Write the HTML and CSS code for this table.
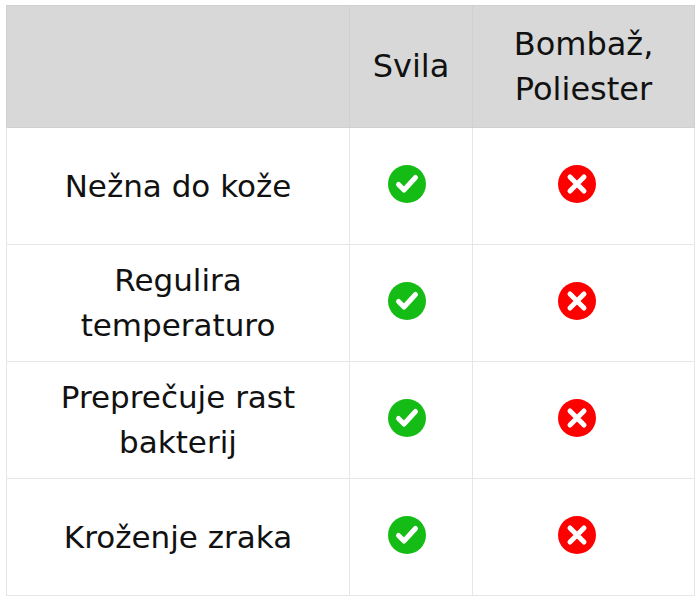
FILE: index.html
```html
<!DOCTYPE html>
<html>
<head>
<meta charset="utf-8">
<link rel="stylesheet" href="styles.css">
</head>
<body>
<table class="cmp">
  <colgroup><col class="c1"><col class="c2"><col class="c3"></colgroup>
  <thead>
    <tr><th></th><th>Svila</th><th>Bombaž,<br>Poliester</th></tr>
  </thead>
  <tbody>
    <tr><td>Nežna do kože</td>
      <td><svg class="ic yes" viewBox="0 0 38 38"><circle cx="19" cy="19" r="19" fill="#16bc16"/><path d="M10.5 19.5 L16 25 L27.5 12.5" fill="none" stroke="#fff" stroke-width="5" stroke-linecap="round" stroke-linejoin="round"/></svg></td>
      <td><svg class="ic no" viewBox="0 0 38 38"><circle cx="19" cy="19" r="19" fill="#fe0000"/><path d="M12 12 L26 26 M26 12 L12 26" fill="none" stroke="#fff" stroke-width="5" stroke-linecap="round"/></svg></td></tr>
    <tr><td>Regulira<br>temperaturo</td>
      <td><svg class="ic yes" viewBox="0 0 38 38"><circle cx="19" cy="19" r="19" fill="#16bc16"/><path d="M10.5 19.5 L16 25 L27.5 12.5" fill="none" stroke="#fff" stroke-width="5" stroke-linecap="round" stroke-linejoin="round"/></svg></td>
      <td><svg class="ic no" viewBox="0 0 38 38"><circle cx="19" cy="19" r="19" fill="#fe0000"/><path d="M12 12 L26 26 M26 12 L12 26" fill="none" stroke="#fff" stroke-width="5" stroke-linecap="round"/></svg></td></tr>
    <tr><td>Preprečuje rast<br>bakterij</td>
      <td><svg class="ic yes" viewBox="0 0 38 38"><circle cx="19" cy="19" r="19" fill="#16bc16"/><path d="M10.5 19.5 L16 25 L27.5 12.5" fill="none" stroke="#fff" stroke-width="5" stroke-linecap="round" stroke-linejoin="round"/></svg></td>
      <td><svg class="ic no" viewBox="0 0 38 38"><circle cx="19" cy="19" r="19" fill="#fe0000"/><path d="M12 12 L26 26 M26 12 L12 26" fill="none" stroke="#fff" stroke-width="5" stroke-linecap="round"/></svg></td></tr>
    <tr><td>Kroženje zraka</td>
      <td><svg class="ic yes" viewBox="0 0 38 38"><circle cx="19" cy="19" r="19" fill="#16bc16"/><path d="M10.5 19.5 L16 25 L27.5 12.5" fill="none" stroke="#fff" stroke-width="5" stroke-linecap="round" stroke-linejoin="round"/></svg></td>
      <td><svg class="ic no" viewBox="0 0 38 38"><circle cx="19" cy="19" r="19" fill="#fe0000"/><path d="M12 12 L26 26 M26 12 L12 26" fill="none" stroke="#fff" stroke-width="5" stroke-linecap="round"/></svg></td></tr>
  </tbody>
</table>
</body>
</html>
```
FILE: styles.css
```css
html, body { margin: 0; padding: 0; background: #fff; }
body { padding: 5px 6px; font-family: "DejaVu Sans", "Noto Sans", sans-serif; color: #111; }
.cmp {
  border-collapse: collapse;
  width: 688px;
  table-layout: fixed;
  font-size: 31px;
  line-height: 45px;
}
.c1 { width: 343px; }
.c2 { width: 123px; }
.c3 { width: 222px; }
.cmp th, .cmp td {
  border: 1px solid #e6e6e6;
  text-align: center;
  vertical-align: middle;
  padding: 0;
  font-weight: normal;
}
.cmp thead th { background: #d8d8d8; height: 121px; border-color: #d0d0d0; font-size: 32px; }
.cmp tbody td { height: 116px; }
.ic { width: 38px; height: 38px; display: block; margin: -4px auto 0; }
.ic.yes { position: relative; left: -4px; }
.ic.no { position: relative; left: -7px; }
```
